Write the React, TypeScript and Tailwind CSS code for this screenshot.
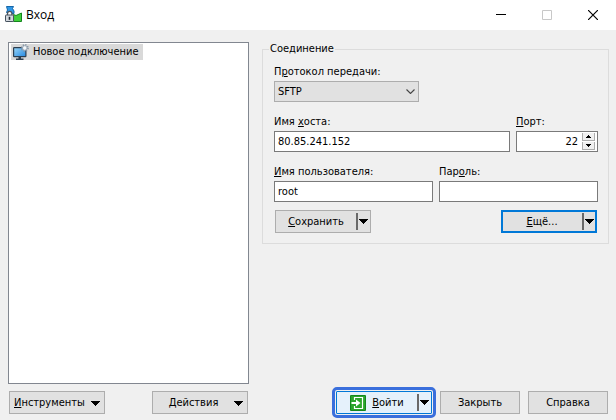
import { useState } from "react";
import type { ReactNode } from "react";

function Caret() {
  return (
    <svg width="9" height="5" viewBox="0 0 9 5" className="shrink-0" shapeRendering="crispEdges" aria-hidden="true">
      <path d="M0 0h9v1h-1v1h-1v1h-1v1h-1v1h-1v-1h-1v-1h-1v-1h-1v-1h-1z" fill="#000" />
    </svg>
  );
}

function AppIcon() {
  return (
    <svg width="17" height="18" viewBox="0 0 17 18" aria-hidden="true">
      <path d="M1.500.5H8.500L7.500 2.500 9 5V7.500H3L1.500 6.500 2.500 4z" fill="#2f97e6" stroke="#1566a8" />
      <path d="M8.500 8.500l2.500 1 5.500-2.500v8.500h-8z" fill="#3fd03a" stroke="#15851f" />
      <path d="M2.500 9.500V7.500a2.200 2.200 0 0 1 4.400 0v2" fill="#fff" stroke="#47525e" strokeWidth="1.300" />
      <rect x=".5" y="9" width="8" height="6.500" rx=".6" fill="#d2d7dd" stroke="#46515d" />
      <path d="M3.700 10.800h1.600v3H3.700z" fill="#1d2730" />
    </svg>
  );
}

function MonitorIcon() {
  return (
    <svg width="16" height="16" viewBox="0 0 16 16" className="shrink-0" aria-hidden="true">
      <defs>
        <linearGradient id="screen" x1="0" y1="0" x2="1" y2="1">
          <stop offset="0" stopColor="#9ad8fa" />
          <stop offset="1" stopColor="#2487e0" />
        </linearGradient>
      </defs>
      <rect x=".6" y="3.600" width="12.300" height="9" rx=".6" fill="url(#screen)" stroke="#2c3e50" strokeWidth="1.200" />
      <path d="M5.500 13H8v1.500h2.500V16H3v-1.500h2.500z" fill="#2c3e50" />
      <circle cx="11.800" cy="4" r="3.200" fill="none" stroke="#8494a4" strokeWidth="1.600" strokeDasharray="1.300 1.213" />
      <circle cx="11.800" cy="4" r="2.300" fill="#f4f7fa" stroke="#9aa8b6" strokeWidth="1" />
    </svg>
  );
}

function LoginIcon() {
  return (
    <svg width="16" height="16" viewBox="0 0 16 16" className="shrink-0" aria-hidden="true">
      <rect width="16" height="16" rx="1" fill="#15871d" />
      <rect x="1" y="1" width="14" height="14" fill="#2ca52b" />
      <path d="M4.500 5V2.500h8v11h-8V11" fill="none" stroke="#fff" strokeWidth="1.200" />
      <path d="M1.500 7H6V4.500L10.500 8 6 11.500V9H1.500z" fill="#fff" />
    </svg>
  );
}

function Field({ id, label, children }: { id: string; label: ReactNode; children: ReactNode }) {
  return (
    <div className="flex min-w-0 flex-col gap-px">
      <label htmlFor={id} className="self-start leading-4">{label}</label>
      {children}
    </div>
  );
}

const input = "h-[21px] w-full min-w-0 border border-[#7a7a7a] bg-white px-[3px] outline-none";
const plain = "flex h-[23px] items-center border border-[#adadad] bg-[#e1e1e1] pt-px";

function SplitButton({ label, more, className }: { label: ReactNode; more: string; className: string }) {
  return (
    <div className={"flex h-[23px] w-24 items-stretch border " + className}>
      <button type="button" className="flex flex-1 items-center justify-center gap-[6px] pt-px">{label}</button>
      <button type="button" aria-label={more} className="my-[2px] flex w-[14px] items-center justify-center border-l-2 border-[#696969] pr-px">
        <Caret />
      </button>
    </div>
  );
}

export default function App() {
  const [port, setPort] = useState(22);
  return (
    <div className="flex min-h-screen flex-col bg-[#f0f0f0] font-['DejaVu_Sans_Condensed','DejaVu_Sans',sans-serif] text-[11px] leading-[14px] text-black">
      <header className="flex h-[30px] items-center bg-white pl-[5px]">
        <AppIcon />
        <h1 className="ml-1 flex-1 font-['Open_Sans','Noto_Sans',sans-serif] text-xs">Вход</h1>
        <button type="button" aria-label="Свернуть" className="flex h-full w-[46px] items-center justify-center">
          <svg width="10" height="10" viewBox="0 0 10 10"><path d="M0 4h10v1H0z" /></svg>
        </button>
        <button type="button" aria-label="Развернуть" disabled className="flex h-full w-[46px] items-center justify-center">
          <svg width="10" height="10" viewBox="0 0 10 10"><path d="M.5.5h9v9h-9z" fill="none" stroke="#c8c8c8" /></svg>
        </button>
        <button type="button" aria-label="Закрыть окно" className="flex h-full w-[46px] items-center justify-center">
          <svg width="10" height="10" viewBox="0 0 10 10"><path d="M0 0l10 10M10 0L0 10" stroke="#000" strokeWidth="1.200" /></svg>
        </button>
      </header>

      <main className="flex flex-1 gap-[13px] pt-3 pr-[7px] pl-2">
        <ul className="w-[241px] shrink-0 border border-[#828790] bg-white p-px pl-[2px]">
          <li>
            <button type="button" className="flex h-4 items-center gap-1 bg-[#d9d9d9] pr-1 pl-[2px] leading-4">
              <MonitorIcon />
              Новое подключение
            </button>
          </li>
        </ul>

        <fieldset className="min-w-0 flex-1 self-start border border-[#dcdcdc] pt-2 pr-[10px] pb-[10px] pl-[11px]">
          <legend className="-ml-[5px] px-px">Соединение</legend>
          <div className="flex flex-col gap-3">
            <Field id="protocol" label={<>П<u>р</u>отокол передачи:</>}>
              <div className="grid w-[145px] items-center">
                <select id="protocol" className="col-start-1 row-start-1 h-[21px] appearance-none border border-[#adadad] bg-[#e1e1e1] px-[3px] pt-px">
                  <option>SFTP</option>
                </select>
                <svg width="9" height="5" viewBox="0 0 9 5" className="pointer-events-none col-start-1 row-start-1 mr-1 justify-self-end" aria-hidden="true">
                  <path d="M.5.5l4 4 4-4" fill="none" stroke="#444" strokeWidth="1.100" />
                </svg>
              </div>
            </Field>
            <div className="flex gap-[6px]">
              <div className="min-w-0 flex-1">
                <Field id="host" label={<>Имя <u>х</u>оста:</>}>
                  <input id="host" defaultValue="80.85.241.152" className={input} />
                </Field>
              </div>
              <div className="w-[82px]">
                <Field id="port" label={<><u>П</u>орт:</>}>
                  <div className="flex h-[21px] items-center border border-[#7a7a7a] bg-white pr-[2px]">
                    <input id="port" value={port} onChange={(e) => setPort(Number(e.target.value) || 0)} inputMode="numeric" className="w-full min-w-0 flex-1 pr-1 text-right outline-none" />
                    <div className="flex flex-col gap-px">
                      <button type="button" aria-label="Увеличить порт" onClick={() => setPort(port + 1)} className="flex h-2 w-[13px] items-center justify-center border border-t-0 border-[#adadad] bg-[#f0f0f0]">
                        <svg width="5" height="3" viewBox="0 0 5 3" shapeRendering="crispEdges"><path d="M2 0h1v1h1v1h1v1H0V2h1V1h1z" /></svg>
                      </button>
                      <button type="button" aria-label="Уменьшить порт" onClick={() => setPort(port - 1)} className="flex h-2 w-[13px] items-center justify-center border border-t-0 border-[#adadad] bg-[#f0f0f0]">
                        <svg width="5" height="3" viewBox="0 0 5 3" shapeRendering="crispEdges"><path d="M0 0h5v1H4v1H3v1H2V2H1V1H0z" /></svg>
                      </button>
                    </div>
                  </div>
                </Field>
              </div>
            </div>
            <div className="grid grid-cols-2 gap-[6px]">
              <Field id="user" label={<><u>И</u>мя пользователя:</>}>
                <input id="user" defaultValue="root" className={input} />
              </Field>
              <Field id="password" label={<>Пар<u>о</u>ль:</>}>
                <input id="password" type="password" className={input} />
              </Field>
            </div>
          </div>
          <div className="mt-2 flex justify-between px-px">
            <SplitButton more="Варианты сохранения" className="border-[#adadad] bg-[#e1e1e1]" label={<span><u>С</u>охранить</span>} />
            <SplitButton more="Дополнительно" className="border-[#0078d7] bg-[#e1e1e1] inset-ring inset-ring-[#0078d7]" label={<span><u>Е</u>щё...</span>} />
          </div>
        </fieldset>
      </main>

      <footer className="flex pt-[7px] pr-2 pb-[6px] pl-[9px]">
        <div className="flex w-[239px] shrink-0 justify-between">
          <button type="button" className={plain + " w-24 justify-between px-1"}>
            <span className="flex-1 text-left"><u>И</u>нструменты</span>
            <Caret />
          </button>
          <button type="button" className={plain + " w-24 justify-between pr-1"}>
            <span className="flex-1 text-center"><u>Д</u>ействия</span>
            <Caret />
          </button>
        </div>
        <div className="flex flex-1 justify-end gap-2">
          <SplitButton
            more="Варианты входа"
            className="rounded-[1px] border-[#0078d7] bg-[#e5f1fb] outline-3 outline-offset-1 outline-[#3a6fdc]"
            label={<><LoginIcon /><span><u>В</u>ойти</span></>}
          />
          <button type="button" className={plain + " w-20 justify-center"}>Закрыть</button>
          <button type="button" className={plain + " w-20 justify-center"}>Справка</button>
        </div>
      </footer>
    </div>
  );
}
